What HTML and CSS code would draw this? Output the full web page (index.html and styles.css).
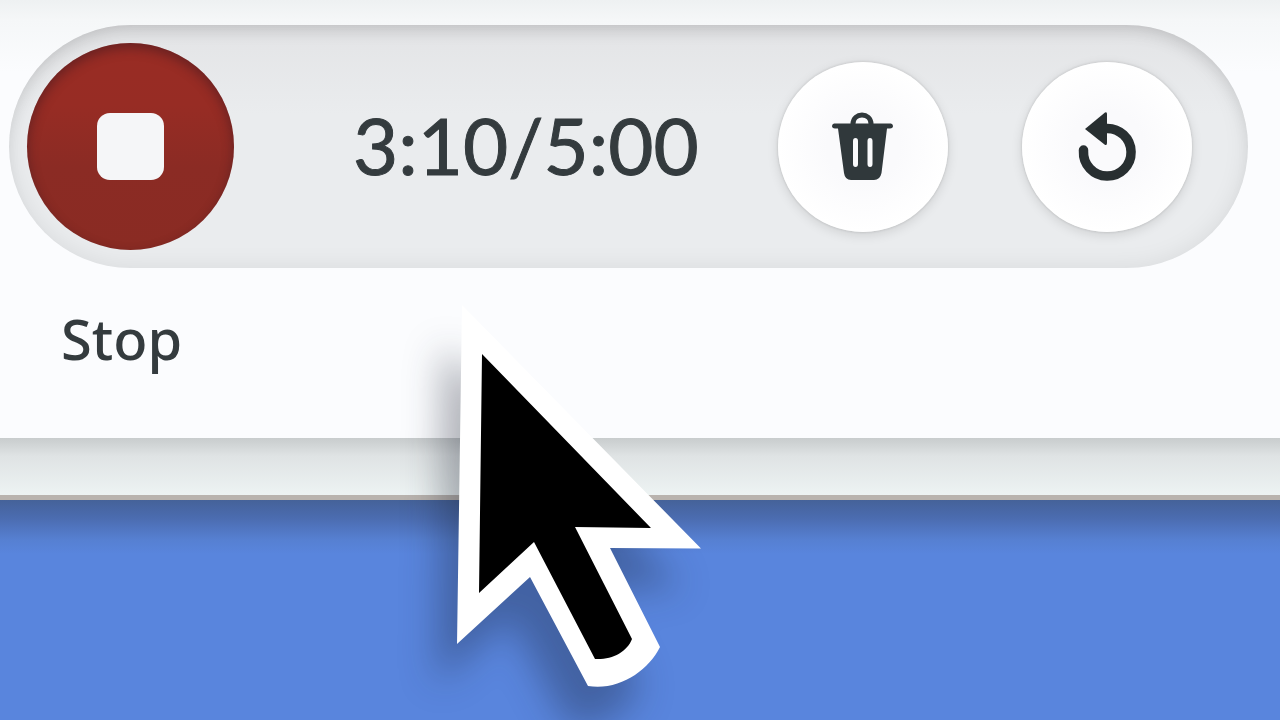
FILE: index.html
```
<!DOCTYPE html>
<html lang="en">
<head>
<meta charset="utf-8">
<title>Recorder</title>
<link rel="stylesheet" href="styles.css">
</head>
<body>
<main class="panel">
  <div class="controls">
    <button class="stop" type="button" aria-labelledby="stop-label"><span class="stop-mark"></span></button>
    <span class="time">3:10/5:00</span>
    <div class="actions">
      <button class="action" type="button" aria-label="Delete">
        <svg class="icon" viewBox="-2 2 90 90" aria-hidden="true">
          <path d="M33 25v-1c0-12 18-12 18 0v1" fill="none" stroke="#30383b" stroke-width="5"/>
          <path fill="#30383b" fill-rule="evenodd" d="M14 23.500H71Q73 24 73 26Q73 28 70 28.500H67L61.500 73Q60 80 54 80H31Q25 80 24 73L18 28.500H15Q12 28 12 26Q12 24 14 23.500ZM35.500 38Q33 38 33 41V64Q33 67 35.500 67Q38 67 38 64V41Q38 38 35.500 38ZM50 38Q47.500 38 47.500 41V64Q47.500 67 50 67Q52.500 67 52.500 64V41Q52.500 38 50 38Z"/>
        </svg>
      </button>
      <button class="action" type="button" aria-label="Restart">
        <svg class="icon" viewBox="2 2 90 90" aria-hidden="true">
          <path d="M23.500 50V51A23.800 23.800 0 1 0 46 28.500" fill="none" stroke="#282f31" stroke-width="9.500" stroke-linecap="round"/>
          <path d="M25 29L45 12.500Q47 11.500 47 14V43Q47 46 44.500 44.500Z" fill="#282f31"/>
        </svg>
      </button>
    </div>
  </div>
  <div class="stop-label" id="stop-label">Stop</div>
</main>
<div class="ledge"></div>
<div class="backdrop"></div>
<svg class="cursor" viewBox="0 0 320 400" aria-hidden="true">
  <path fill="#fff" d="M42 -15L281 228.500L190 228L240 327C228 351 199 371 168 366L110 257L37 324Z"/>
  <path fill="#000" d="M62 34L231 208L155 207L212 319C207 332 192 340 175 339L114 222L59 273Z"/>
</svg>
</body>
</html>
```
FILE: styles.css
```
* { box-sizing: border-box; }

html { height: 100%; }

body {
  margin: 0;
  min-height: 100%;
  display: flex;
  flex-direction: column;
  position: relative;
  overflow: hidden;
  font-family: Lato, "Open Sans", sans-serif;
  color: #343b3e;
}

.panel {
  padding: 25px 32px 66px 9px;
  background: linear-gradient(#eef1f2 0, #f5f7f8 20px, #fbfcfe 72px);
}

.controls {
  display: flex;
  align-items: center;
  padding: 18px 56px 18px 18px;
  border-radius: 122px;
  background: linear-gradient(#e3e4e6, #eaecee 90px);
  box-shadow:
    inset 0 10px 18px -8px rgba(0, 0, 0, 0.14),
    inset 0 0 24px rgba(0, 0, 0, 0.08);
}

button {
  display: grid;
  place-items: center;
  flex: none;
  padding: 0;
  border: 0;
  border-radius: 50%;
}

.stop {
  width: 207px;
  height: 207px;
  background: linear-gradient(#992c24 0, #972c24 30%, #8b2b24 60%, #8a2b23);
  box-shadow: inset 0 5px 12px rgba(45, 20, 30, 0.45);
}

.stop-mark {
  width: 67px;
  height: 67px;
  border-radius: 13px;
  background: #f5f6f8;
}

.time {
  margin-left: 119px;
  padding-bottom: 4px;
  font-size: 78px;
  line-height: 96px;
  -webkit-text-stroke: 1px #343b3e;
}

.actions {
  display: flex;
  gap: 74px;
  margin-left: auto;
}

.action {
  width: 170px;
  height: 170px;
  background: radial-gradient(#fafafc 30%, #fff 70%);
  box-shadow: 0 3px 12px rgba(0, 0, 0, 0.12), 0 0 3px rgba(0, 0, 0, 0.16);
}

.icon {
  width: 90px;
  height: 90px;
}

.stop-label {
  padding: 36px 0 0 52px;
  font-family: "Noto Sans", sans-serif;
  font-size: 56px;
  line-height: 68px;
  font-weight: 500;
}

.ledge {
  height: 62px;
  border-bottom: 5px solid #b9b3ae;
  background: linear-gradient(#c8cccd, #dfe3e4 18px, #edf3f3);
}

.backdrop {
  flex: 1;
  background: linear-gradient(#456299 0, #4b6cb0 18px, #5680d2 40px, #5985dd 54px);
}

.cursor {
  position: absolute;
  left: 420px;
  top: 320px;
  width: 320px;
  height: 400px;
  overflow: visible;
  filter: drop-shadow(-20px 40px 18px rgba(20, 24, 40, 0.32));
}
```
